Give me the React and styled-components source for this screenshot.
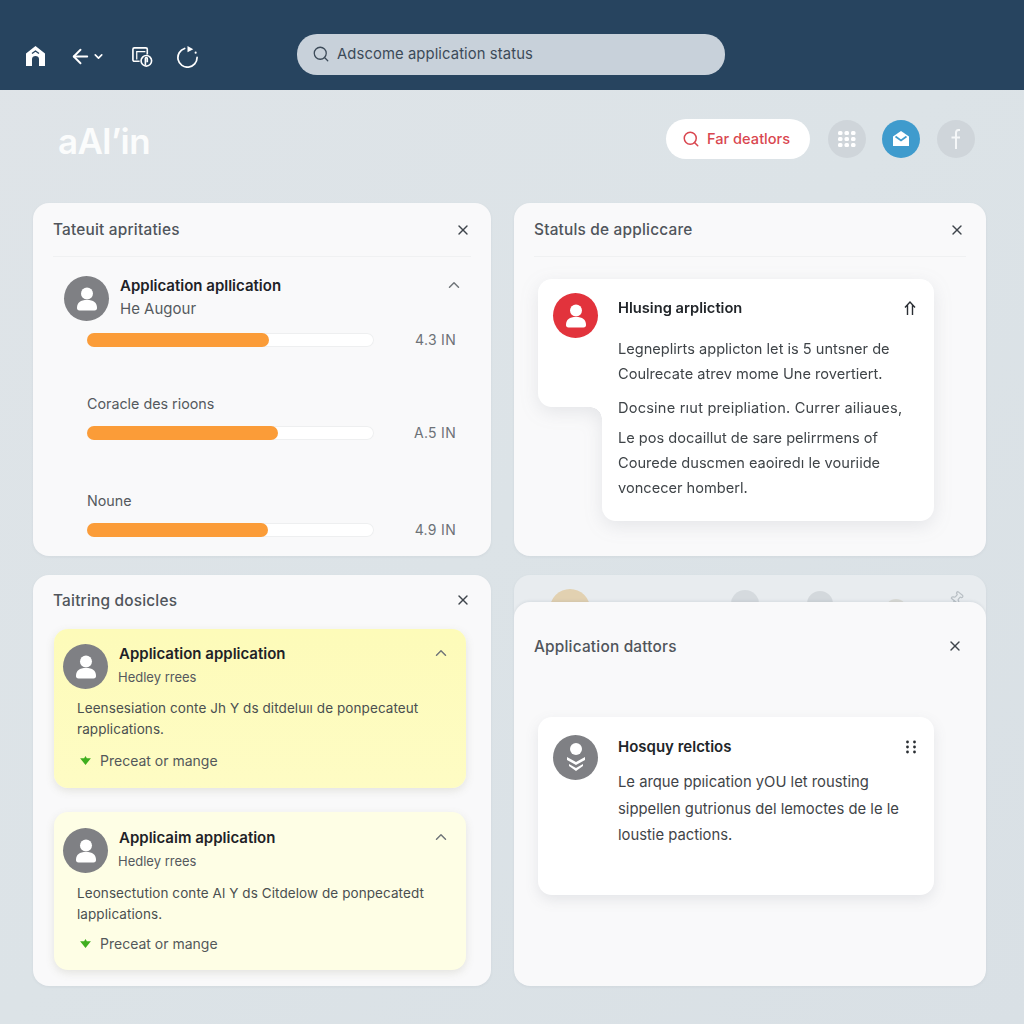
import React from "react";
import styled, { createGlobalStyle } from "styled-components";
import { Search, ArrowLeft, ChevronDown, ChevronUp, X, Pin } from "lucide-react";

const Global = createGlobalStyle`
    html, body {
        margin: 0;
        padding: 0;
        background: #dce2e7;
    }
    * {
        box-sizing: border-box;
    }
`

const Page = styled.div`
    width: 1024px;
    height: 1024px;
    overflow: hidden;
    background: linear-gradient(135deg, #dfe4e8 0%, #dce3e7 50%, #d9e0e5 100%);
    font-family: 'Inter', 'Liberation Sans', sans-serif;
`

const Header = styled.header`
    height: 90px;
    background: #27445f;
    display: flex;
    align-items: center;
    padding: 22px 0 0 24px;
`

const NavIcons = styled.nav`
    display: flex;
    align-items: center;
    width: 273px;
    color: #fff;
`

const NavItem = styled.span`
    display: flex;
    align-items: center;
    margin-right: ${p => p.$gap}px;
`

const SearchBox = styled.div`
    width: 428px;
    height: 41px;
    margin-top: -4px;
    border-radius: 20px;
    background: #c8d1da;
    display: flex;
    align-items: center;
    gap: 7px;
    padding-left: 15px;
    color: #3c4a58;
    font-size: 14.8px;
    letter-spacing: 0.1px;
`

const TopRow = styled.div`
    height: 113px;
    display: flex;
    align-items: center;
    justify-content: space-between;
    padding: 0 49px 16px 58px;
`

const Logo = styled.div`
    color: #fbfcfc;
    font-size: 35px;
    font-weight: 600;
    letter-spacing: -0.6px;
    margin-top: 4px;
`

const Actions = styled.div`
    display: flex;
    align-items: center;
    margin-top: 0;
`

const FilterButton = styled.button`
    width: 144px;
    height: 40px;
    margin-right: 18px;
    border: 0;
    border-radius: 20px;
    background: #fff;
    color: #d9464f;
    display: flex;
    align-items: center;
    gap: 7px;
    padding: 0 0 0 16px;
    font-family: inherit;
    font-size: 14.6px;
    font-weight: 500;
`

const RoundIcon = styled.span`
    width: 38px;
    height: 38px;
    margin-left: ${p => p.$left || 0}px;
    border-radius: 50%;
    background: ${p => p.$bg};
    display: flex;
    align-items: center;
    justify-content: center;
`

const Board = styled.main`
    display: grid;
    grid-template-columns: 458px 472px;
    grid-template-rows: 353px 411px;
    column-gap: 23px;
    row-gap: 19px;
    padding-left: 33px;
`

const Panel = styled.section`
    position: relative;
    border-radius: 16px;
    background: ${p => p.$bg || "#f9f9fa"};
    box-shadow: 0 1px 3px rgba(90, 105, 120, 0.08);
    overflow: hidden;
`

const PanelHead = styled.div`
    height: ${p => p.$h || 54}px;
    margin: 0 20px;
    display: flex;
    align-items: center;
    justify-content: space-between;
    color: #50555b;
    font-size: 15.4px;
    font-weight: 500;
    letter-spacing: 0.2px;
    border-bottom: ${p => (p.$line ? "1px solid #f0f1f2" : "0")};
`

const Close = styled(X)`
    color: #3f454b;
    margin-right: ${p => p.$right || 0}px;
`

const Person = styled.div`
    display: flex;
    padding: 19px 28px 0 31px;
`

const Avatar = styled.span`
    flex: none;
    width: 45px;
    height: 45px;
    border-radius: 50%;
    background: ${p => p.$bg || "#7f8084"};
    display: flex;
    align-items: center;
    justify-content: center;
`

const PersonText = styled.div`
    flex: 1;
    padding-left: 11px;
`

const Name = styled.div`
    color: #1e2227;
    font-size: 15px;
    font-weight: 600;
    line-height: 20px;
`

const Sub = styled.div`
    color: #55595e;
    font-size: ${p => p.$size || 13}px;
    line-height: 18px;
    margin-top: 4px;
    margin-left: ${p => p.$left || 0}px;
`

const Metric = styled.div`
    padding: 0 35px 0 54px;
    margin-top: ${p => p.$top}px;
`

const MetricLabel = styled.div`
    color: #55595e;
    font-size: 14.3px;
    line-height: 18px;
    margin-bottom: 11px;
`

const BarRow = styled.div`
    display: flex;
    align-items: center;
    justify-content: space-between;
    color: #6d7277;
    font-size: 14px;
    letter-spacing: 0.3px;
`

const Track = styled.div`
    width: 287px;
    height: 14px;
    border-radius: 7px;
    background: #fff;
    box-shadow: inset 0 0 0 1px #eeeff0;
`

const Fill = styled.div`
    height: 100%;
    border-radius: 7px;
    background: #fb9c38;
`

const NoteList = styled.div`
    display: flex;
    flex-direction: column;
    gap: 24px;
    padding: 4px 25px 0 21px;
`

const Note = styled.article`
    height: ${p => p.$h}px;
    border-radius: 14px;
    background: ${p => p.$bg};
    box-shadow: 0 3px 8px rgba(120, 120, 90, 0.16);
    padding: ${p => p.$pad}px 16px 0 9px;
`

const NoteTop = styled.div`
    display: flex;
    margin-bottom: ${p => p.$after}px;
`

const NoteBody = styled.p`
    margin: 0 0 0 14px;
    color: #4a4f50;
    font-size: 13.5px;
    line-height: 21px;
    letter-spacing: 0.08px;
`

const NoteAction = styled.div`
    display: flex;
    align-items: center;
    gap: 9px;
    margin: ${p => p.$top}px 0 0 17px;
    color: #53585a;
    font-size: 14px;
    line-height: 21px;
`

const StatusCard = styled.div`
    display: flex;
    align-items: flex-start;
    margin: ${p => p.$top}px 0 0 24px;
    filter: drop-shadow(0 5px 9px rgba(90, 100, 115, 0.13));
`

const CardTab = styled.div`
    position: relative;
    flex: none;
    width: 64px;
    height: 128px;
    padding: 14px 0 0 15px;
    background: #fff;
    border-radius: 14px 0 0 14px;
    &::after {
        content: "";
        position: absolute;
        right: 0;
        bottom: -12px;
        width: 12px;
        height: 12px;
        background: radial-gradient(circle at 0 100%, transparent 11.5px, #fff 12px);
    }
`

const CardMain = styled.div`
    width: 332px;
    height: ${p => p.$h}px;
    background: #fff;
    border-radius: 0 14px 14px 14px;
    padding: 19px 17px 0 16px;
`

const PlainCard = styled.div`
    width: 396px;
    height: 178px;
    margin: 44px 0 0 24px;
    display: flex;
    border-radius: 14px;
    background: #fff;
    box-shadow: 0 5px 14px rgba(90, 100, 115, 0.13);
    padding: 18px 17px 0 15px;
`

const PlainBody = styled.div`
    flex: 1;
    padding: 2px 0 0 20px;
`

const CardTitle = styled.div`
    display: flex;
    align-items: center;
    justify-content: space-between;
    color: #212529;
    font-size: ${p => p.$size || 14.7}px;
    font-weight: 600;
    line-height: 20px;
`

const CardText = styled.p`
    margin: ${p => p.$top}px 0 0;
    color: #3f4448;
    font-size: ${p => p.$size || 14.6}px;
    line-height: ${p => p.$lh || 25}px;
    letter-spacing: ${p => p.$ls || 0}px;
`

const BackRow = styled.div`
    display: flex;
    align-items: flex-start;
    padding: 14px 0 0 36px;
    opacity: 0.75;
`

const Ghost = styled.span`
    flex: none;
    width: ${p => p.$size}px;
    height: ${p => p.$size}px;
    margin-left: ${p => p.$left || 0}px;
    margin-top: ${p => p.$top || 0}px;
    border-radius: 50%;
    background: ${p => p.$bg};
`

const GhostPin = styled(Pin)`
    flex: none;
    margin: 2px 0 0 42px;
    color: #aab2b8;
    transform: rotate(40deg);
`

const FrontPanel = styled.div`
    position: absolute;
    top: 27px;
    left: 0;
    right: 0;
    bottom: 0;
    padding-top: 17px;
    border-radius: 16px;
    background: #f9f9fa;
    box-shadow: 0 -1px 3px rgba(90, 105, 120, 0.12);
`

function PersonIcon() {
    return (
        <svg width="24" height="26" viewBox="0 0 24 26" fill="#fff">
            <circle cx="12" cy="7.5" r="6" />
            <path d="M2 22c0-5.5 3.500-8 10-8s10 2.500 10 8c0 1.600-.8 2.500-2.500 2.500h-15C2.800 24.500 2 23.600 2 22z" />
        </svg>
    )
}

function BadgeIcon() {
    return (
        <svg width="24" height="32" viewBox="0 0 24 32" fill="none">
            <circle cx="12" cy="7" r="6" fill="#fff" />
            <path d="M3 15l9 5 9-5v3l-9 5-9-5z" fill="#fff" />
            <path d="M5 22l7 4 7-4v2l-7 5-7-5z" fill="#fff" />
        </svg>
    )
}

function HomeIcon() {
    return (
        <svg width="23" height="22" viewBox="0 0 23 22">
            <path d="M11.500 1L21 8.500V21h-6v-7c0-1.800-1.500-3-3.500-3S8 12.200 8 14v7H2V8.500z" fill="#fff" />
            <path d="M8 8.500l3.500-2.500 3.500 2.500" fill="none" stroke="#27445f" strokeWidth="1.400" />
        </svg>
    )
}

function ScreenIcon() {
    return (
        <svg width="23" height="23" viewBox="0 0 24 24" fill="none" stroke="#fff" strokeWidth="1.700">
            <path d="M9 17H3.500C2.700 17 2 16.400 2 15.500V4.500C2 3.600 2.700 3 3.500 3h12c.9 0 1.500.6 1.500 1.500V10" />
            <path d="M6 15V7h9" strokeWidth="1.300" />
            <circle cx="16" cy="16.500" r="5.500" />
            <path d="M15 21v-7c0-1.200 2-1.200 2 0v4" />
        </svg>
    )
}

function ReloadIcon() {
    return (
        <svg width="23" height="23" viewBox="0 0 24 24" fill="none">
            <path d="M9 3.600A10 10 0 1 0 22 13" stroke="#fff" strokeWidth="1.800" strokeLinecap="round" />
            <path d="M12 1l6 3.500-6 3z" fill="#fff" />
            <circle cx="20.500" cy="8" r="1.100" fill="#fff" />
        </svg>
    )
}

function DotsIcon() {
    const dots = []
    for (let x = 0; x < 3; x++) {
        for (let y = 0; y < 3; y++) {
            dots.push(<rect key={`${x}-${y}`} x={x * 6.500} y={y * 6} width="4.500" height="4" rx="1.500" fill="#fff" />)
        }
    }
    return <svg width="18" height="16" viewBox="0 0 18 16">{dots}</svg>
}

function OpenMailIcon() {
    return (
        <svg width="18" height="17" viewBox="0 0 18 17">
            <path d="M1 6.500L9 1l8 5.500V16H1z" fill="#fff" />
            <path d="M3.500 6.500L9 10.500l5.500-4" fill="none" stroke="#3f9bcd" strokeWidth="1.700" />
        </svg>
    )
}

function FacebookIcon() {
    return (
        <svg width="12" height="22" viewBox="0 0 12 22" fill="none" stroke="#f5f7f8" strokeWidth="2">
            <path d="M10 2H8.500C6.800 2 6 3 6 4.800V21M1.500 9.500H10" />
        </svg>
    )
}

function GreenMark() {
    return (
        <svg width="11" height="9" viewBox="0 0 12 10">
            <path d="M6 0l1.500 2.500H12L6 10 0 2.500h4.500z" fill="#3fae1f" />
        </svg>
    )
}

function GripIcon() {
    return (
        <svg width="12" height="14" viewBox="0 0 12 14" fill="#2a2e33">
            <circle cx="2.500" cy="2" r="1.400" />
            <circle cx="9.500" cy="2" r="1.400" />
            <circle cx="2.500" cy="7" r="1.400" />
            <circle cx="9.500" cy="7" r="1.400" />
            <circle cx="2.500" cy="12" r="1.400" />
            <circle cx="9.500" cy="12" r="1.400" />
        </svg>
    )
}

function UpArrowIcon() {
    return (
        <svg width="14" height="16" viewBox="0 0 14 16" fill="none" stroke="#2a2e33" strokeWidth="1.400">
            <path d="M2 7.500L7 2l5 5.500M4.500 15V5M9.500 15V5" />
        </svg>
    )
}

function Bar({ percent, value }) {
    return (
        <BarRow>
            <Track>
                <Fill style={{ width: `${percent}%` }} />
            </Track>
            <span>{value}</span>
        </BarRow>
    )
}

function NoteCard({ bg, h, pad, after, actionTop, title, body, line }) {
    return (
        <Note $bg={bg} $h={h} $pad={pad}>
            <NoteTop $after={after}>
                <Avatar><PersonIcon /></Avatar>
                <PersonText>
                    <Name>{title}</Name>
                    <Sub $left={-1}>Hedley rrees</Sub>
                </PersonText>
                <ChevronUp size={18} color="#71767a" />
            </NoteTop>
            <NoteBody>{body}<br />{line}</NoteBody>
            <NoteAction $top={actionTop}><GreenMark />Preceat or mange</NoteAction>
        </Note>
    )
}

export default function App() {
    return (
        <Page>
            <Global />
            <Header>
                <NavIcons>
                    <NavItem $gap={22}><HomeIcon /></NavItem>
                    <NavItem $gap={26}>
                        <ArrowLeft size={23} strokeWidth={2} />
                        <ChevronDown size={13} strokeWidth={3} />
                    </NavItem>
                    <NavItem $gap={22}><ScreenIcon /></NavItem>
                    <NavItem $gap={0}><ReloadIcon /></NavItem>
                </NavIcons>
                <SearchBox>
                    <Search size={18} strokeWidth={1.700} />
                    Adscome application status
                </SearchBox>
            </Header>
            <TopRow>
                <Logo>aAl’in</Logo>
                <Actions>
                    <FilterButton>
                        <Search size={18} strokeWidth={2} />
                        Far deatlors
                    </FilterButton>
                    <RoundIcon $bg="#cfd5da"><DotsIcon /></RoundIcon>
                    <RoundIcon $bg="#3f9bcd" $left={16}><OpenMailIcon /></RoundIcon>
                    <RoundIcon $bg="#cfd5da" $left={17}><FacebookIcon /></RoundIcon>
                </Actions>
            </TopRow>
            <Board>
                <Panel>
                    <PanelHead $line>
                        Tateuit apritaties
                        <Close size={16} />
                    </PanelHead>
                    <Person>
                        <Avatar><PersonIcon /></Avatar>
                        <PersonText>
                            <Name>Application apllication</Name>
                            <Sub $size={15}>He Augour</Sub>
                        </PersonText>
                        <ChevronUp size={18} color="#71767a" />
                    </Person>
                    <Metric $top={10}>
                        <Bar percent={63.500} value="4.3 IN" />
                    </Metric>
                    <Metric $top={47}>
                        <MetricLabel>Coracle des rioons</MetricLabel>
                        <Bar percent={66.500} value="A.5 IN" />
                    </Metric>
                    <Metric $top={51}>
                        <MetricLabel>Noune</MetricLabel>
                        <Bar percent={63} value="4.9 IN" />
                    </Metric>
                </Panel>
                <Panel>
                    <PanelHead $line>
                        Statuls de appliccare
                        <Close size={16} $right={1} />
                    </PanelHead>
                    <StatusCard $top={22}>
                        <CardTab><Avatar $bg="#e2333c"><PersonIcon /></Avatar></CardTab>
                        <CardMain $h={242}>
                            <CardTitle>Hlusing arpliction <UpArrowIcon /></CardTitle>
                            <CardText $top={19}>
                                Legneplirts applicton let is 5 untsner de<br />
                                Coulrecate atrev mome Une rovertiert.
                            </CardText>
                            <CardText $top={9} $ls={0.2}>Docsine rıut preipliation. Currer ailiaues,</CardText>
                            <CardText $top={5}>
                                Le pos docaillut de sare pelirrmens of<br />
                                Courede duscmen eaoiredı le vouriide<br />
                                voncecer homberl.
                            </CardText>
                        </CardMain>
                    </StatusCard>
                </Panel>
                <Panel>
                    <PanelHead $h={50}>
                        Taitring dosicles
                        <Close size={16} />
                    </PanelHead>
                    <NoteList>
                        <NoteCard
                            bg="linear-gradient(180deg, #fdfbb9 0%, #fefcc4 100%)"
                            h={159}
                            pad={15}
                            after={9}
                            actionTop={10}
                            title="Application application"
                            body="Leensesiation conte Jh Y ds ditdeluıı de ponpecateut"
                            line="rapplications."
                        />
                        <NoteCard
                            bg="#fefee5"
                            h={158}
                            pad={16}
                            after={10}
                            actionTop={8}
                            title="Applicaim application"
                            body="Leonsectution conte Al Y ds Citdelow de ponpecatedt"
                            line="lapplications."
                        />
                    </NoteList>
                </Panel>
                <Panel $bg="#e8ecef">
                    <BackRow>
                        <Ghost $size={40} $bg="#e0c89c" />
                        <Ghost $size={28} $bg="#cfd5d9" $left={141} $top={1} />
                        <Ghost $size={26} $bg="#cdd2d6" $left={48} $top={2} />
                        <Ghost $size={22} $bg="#d5d4cc" $left={52} $top={10} />
                        <GhostPin size={15} />
                    </BackRow>
                    <FrontPanel>
                        <PanelHead $h={54}>
                            Application dattors
                            <Close size={16} $right={3} />
                        </PanelHead>
                        <PlainCard>
                            <Avatar><BadgeIcon /></Avatar>
                            <PlainBody>
                                <CardTitle $size={15}>Hosquy relctios <GripIcon /></CardTitle>
                                <CardText $top={12} $lh={26.500} $size={14.8}>
                                    Le arque ppıication yOU let rousting<br />
                                    sippellen gutrionus del lemoctes de le le<br />
                                    loustie pactions.
                                </CardText>
                            </PlainBody>
                        </PlainCard>
                    </FrontPanel>
                </Panel>
            </Board>
        </Page>
    )
}
